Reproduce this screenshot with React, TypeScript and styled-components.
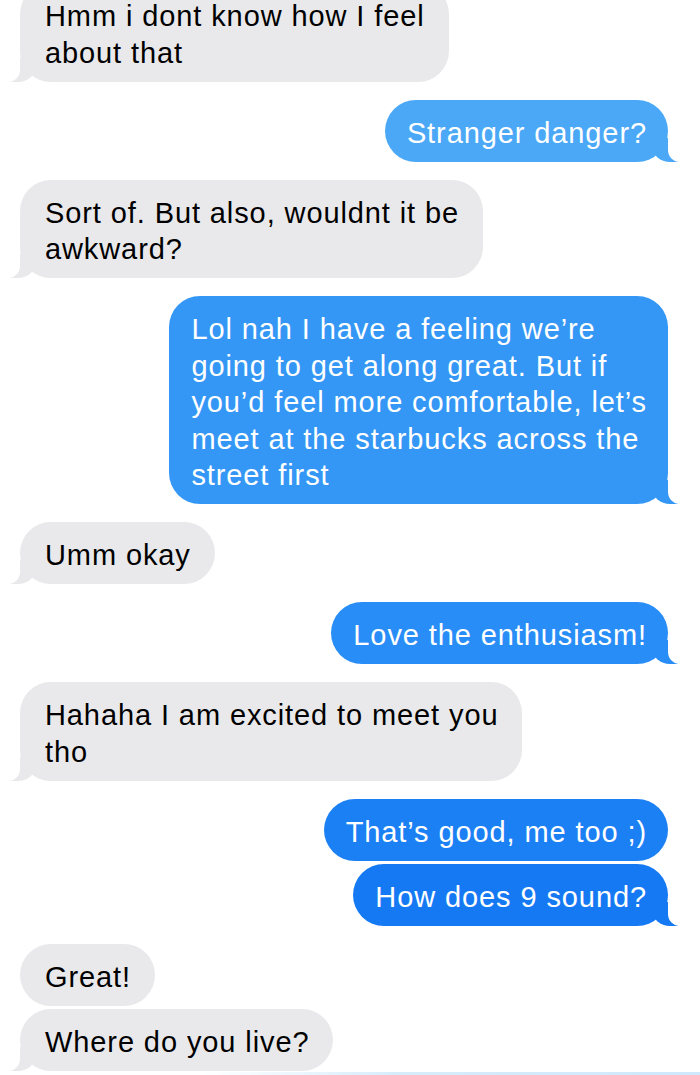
import styled, { createGlobalStyle } from "styled-components";

type Side = "them" | "me";

interface Message {
  id: number;
  from: Side;
  text: string;
  tail: boolean;
  tight?: boolean;
  tone?: string;
}

const GRAY = "#e9e9eb";

const messages: Message[] = [
  { id: 1, from: "them", text: "Hmm i dont know how I feel\nabout that", tail: true },
  { id: 2, from: "me", text: "Stranger danger?", tail: true, tone: "#4aa8f7" },
  { id: 3, from: "them", text: "Sort of. But also, wouldnt it be\nawkward?", tail: true },
  {
    id: 4,
    from: "me",
    text: "Lol nah I have a feeling we’re\ngoing to get along great. But if\nyou’d feel more comfortable, let’s\nmeet at the starbucks across the\nstreet first",
    tail: true,
    tone: "#3497f5",
  },
  { id: 5, from: "them", text: "Umm okay", tail: true },
  { id: 6, from: "me", text: "Love the enthusiasm!", tail: true, tone: "#288df6" },
  { id: 7, from: "them", text: "Hahaha I am excited to meet you\ntho", tail: true },
  { id: 8, from: "me", text: "That’s good, me too ;)", tail: false, tone: "#1c80f5" },
  { id: 9, from: "me", text: "How does 9 sound?", tail: true, tight: true, tone: "#1679f4" },
  { id: 10, from: "them", text: "Great!", tail: false },
  { id: 11, from: "them", text: "Where do you live?", tail: true, tight: true },
];

export default function App() {
  return (
    <>
      <GlobalStyle />
      <Screen>
        <Thread>
          {messages.map((m) => (
            <Row key={m.id} $from={m.from} $tight={!!m.tight}>
              <Bubble $from={m.from} $tail={m.tail} $color={m.from === "me" ? m.tone ?? "#1b7ff5" : GRAY}>
                {m.text}
              </Bubble>
            </Row>
          ))}
        </Thread>
        <NextEdge />
      </Screen>
    </>
  );
}

const GlobalStyle = createGlobalStyle`
  html, body {
    margin: 0;
    padding: 0;
    background: #ffffff;
  }
  body {
    font-family: "Liberation Sans", Arial, sans-serif;
    -webkit-font-smoothing: antialiased;
  }
`;

const Screen = styled.div`
  width: 700px;
  height: 1075px;
  overflow: hidden;
  background: #ffffff;
  display: flex;
  flex-direction: column;
`;

const Thread = styled.div`
  flex: 1;
  display: flex;
  flex-direction: column;
  padding: 0 32px 0 20px;
  margin-top: -35px;
`;

const Row = styled.div<{ $from: Side; $tight: boolean }>`
  display: flex;
  justify-content: ${(p) => (p.$from === "me" ? "flex-end" : "flex-start")};
  margin-top: ${(p) => (p.$tight ? "3px" : "18px")};
`;

const Bubble = styled.div<{ $from: Side; $tail: boolean; $color: string }>`
  position: relative;
  max-width: 580px;
  padding: ${(p) => (p.$from === "me" ? "15px 21px 10.5px 22px" : "15px 24px 10.5px 25px")};
  border-radius: 31px;
  background: ${(p) => p.$color};
  color: ${(p) => (p.$from === "me" ? "#ffffff" : "#000000")};
  font-size: 29px;
  line-height: 36.5px;
  letter-spacing: 0.9px;
  white-space: pre-line;

  &::before,
  &::after {
    content: "";
    display: ${(p) => (p.$tail ? "block" : "none")};
    position: absolute;
    bottom: 0;
    height: 24px;
  }

  &::before {
    width: 26px;
    background: ${(p) => p.$color};
    ${(p) =>
      p.$from === "me"
        ? `right: -10px; border-bottom-left-radius: 18px 16px;`
        : `left: -10px; border-bottom-right-radius: 18px 16px;`}
  }

  &::after {
    width: 30px;
    background: #ffffff;
    ${(p) =>
      p.$from === "me"
        ? `right: -30px; border-bottom-left-radius: 12px;`
        : `left: -30px; border-bottom-right-radius: 12px;`}
  }
`;

const NextEdge = styled.div`
  height: 3px;
  margin-left: 200px;
  background: linear-gradient(to right, #ffffff, #d6ecfb 40%, #cfe8fb);
`;
